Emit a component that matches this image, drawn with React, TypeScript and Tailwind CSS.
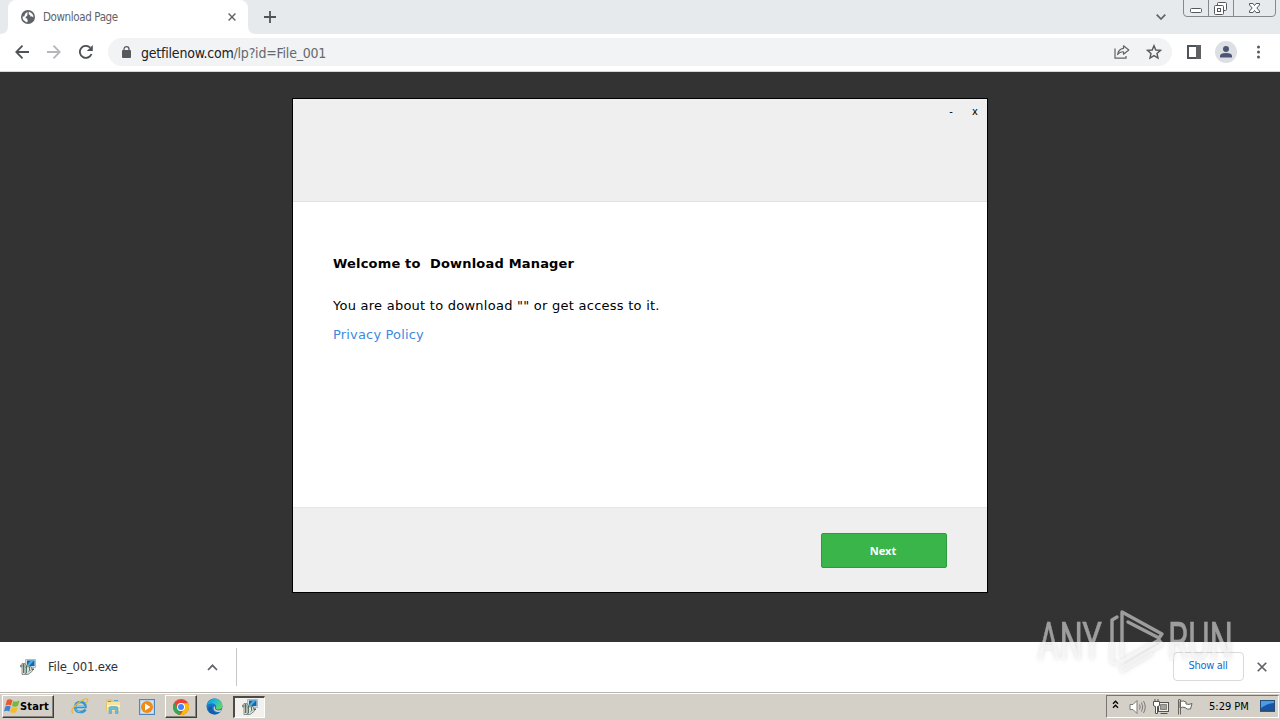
import type { ReactNode } from 'react';

function GlobeIcon() {
  return (
    <svg width="14" height="14" viewBox="0 0 14 14">
      <circle cx="7" cy="7" r="7" fill="#5f6368" />
      <path d="M7.500 1.600 A5.400 5.400 0 0 0 1.700 6.300 H4.200 L5.300 4.800 6.800 4.500 6.300 3.300Z M1.700 7.500 L5.300 7.600 7 9.200 8.200 9.500 8.600 8 10.600 7.300 12.400 7.800 A5.500 5.500 0 0 1 6.500 12.400 L6.600 10.800 3.800 9.800Z" fill="#fff" transform="rotate(90 7 7)" />
    </svg>
  );
}

function CrossIcon({ size = 8, color = '#5f6368' }: { size?: number; color?: string }) {
  return (
    <svg width={size} height={size} viewBox="0 0 8 8">
      <path d="M.6 .6 L7.4 7.4 M7.4 .6 L.6 7.4" stroke={color} strokeWidth="1.4" />
    </svg>
  );
}

function WindowControls() {
  return (
    <svg width="94" height="18" viewBox="0 0 94 18" fill="none">
      <path d="M.5 0 V13 Q.5 16.5 4 16.5 H89 Q92.500 16.500 92.500 13 V0 M25.500 0 V16 M50.500 0 V16" stroke="#85898e" />
      <g stroke="#54585c">
        <rect x="7.500" y="8.500" width="11" height="4" rx="1" fill="#fff" />
        <rect x="34.500" y="2.500" width="9" height="8" rx="1" fill="#fff" />
        <rect x="31.500" y="5.500" width="9" height="9" rx="1" fill="#fff" />
        <rect x="34.500" y="8.500" width="3" height="3" />
        <path d="M66.500 3.500 H70 L71.500 5.500 73 3.500 H76.500 V5 L73.800 8 76.500 11 V12.500 H73 L71.500 10.500 70 12.500 H66.500 V11 L69.200 8 66.500 5Z" fill="#fff" />
      </g>
    </svg>
  );
}

function TabStrip() {
  return (
    <div className="flex h-[34px] bg-[#e7eaed]">
      <svg width="8" height="34" viewBox="0 0 8 34">
        <path d="M0 34 Q8 34 8 26 V34Z" fill="#fff" />
      </svg>
      <div className="flex h-[34px] w-60 items-center rounded-t-lg bg-white pl-[13px] pr-3">
        <GlobeIcon />
        <span className="ml-2 flex-1 whitespace-nowrap pt-px text-[11.5px] tracking-[-0.38px] text-[#5f6368]">Download Page</span>
        <CrossIcon />
      </div>
      <svg width="8" height="34" viewBox="0 0 8 34">
        <path d="M8 34 Q0 34 0 26 V34Z" fill="#fff" />
      </svg>
      <svg className="ml-2 mt-[11px]" width="12" height="12" viewBox="0 0 12 12">
        <path d="M6 0 V12 M0 6 H12" stroke="#505458" strokeWidth="1.800" />
      </svg>
      <svg className="ml-auto mr-[17px] mt-[14px]" width="10" height="6" viewBox="0 0 10 6">
        <path d="M.7 .7 L5 5 9.300 .7" fill="none" stroke="#5f6368" strokeWidth="1.700" />
      </svg>
      <WindowControls />
      <div className="w-[3px]" />
    </div>
  );
}

function Toolbar() {
  return (
    <div className="flex h-[38px] items-center border-b border-[#d5d7da] bg-white pb-px">
      <svg className="ml-[15px]" width="14" height="14" viewBox="0 0 14 14" fill="none" stroke="#4f5357" strokeWidth="1.800">
        <path d="M14 7 H1.500 M7.500 .7 L1.300 7 7.500 13.300" />
      </svg>
      <svg className="ml-[18px]" width="14" height="14" viewBox="0 0 14 14" fill="none" stroke="#b5b7ba" strokeWidth="1.800">
        <path d="M0 7 H12.500 M6.500 .7 L12.700 7 6.500 13.300" />
      </svg>
      <svg className="ml-[18px]" width="14" height="14" viewBox="0 0 14 14">
        <path d="M12.500 9 A6 6 0 1 1 11.200 2.700" fill="none" stroke="#4f5357" strokeWidth="1.900" />
        <path d="M13.800 0 V6 H7.800Z" fill="#4f5357" />
      </svg>
      <div className="ml-[15px] flex h-7 w-[1064px] items-center rounded-full bg-[#f1f3f4] pl-[14px] pr-[10px]">
        <svg width="9" height="12" viewBox="0 0 9 12">
          <path d="M2 5 V3.300 Q2 .7 4.500 .7 T7 3.300 V5" fill="none" stroke="#55595d" strokeWidth="1.300" />
          <rect y="4" width="9" height="8" rx="1" fill="#55595d" />
        </svg>
        <span className="ml-[10px] flex-1 whitespace-nowrap pt-0.5 text-[14px] tracking-[-0.21px] text-[#202124]">
          getfilenow.com<span className="text-[#65696d]">/lp?id=File_001</span>
        </span>
        <svg className="mr-4" width="16" height="14" viewBox="0 0 16 14" fill="none" stroke="#5f6368" strokeWidth="1.200">
          <path d="M1 3.500 V13.200 H12 V11" />
          <path d="M9.500 3.300 V.8 L14.800 5 9.500 9.200 V6.800 Q6 6.500 3.600 9.500 Q4.500 4 9.500 3.300Z" strokeLinejoin="round" />
        </svg>
        <svg width="16" height="16" viewBox="0 0 16 16">
          <path d="M8 1.700 L9.800 6 14.500 6.400 11 9.400 12 14 8 11.600 4 14 5 9.400 1.500 6.400 6.200 6Z" fill="none" stroke="#55595d" strokeWidth="1.400" />
        </svg>
      </div>
      <svg className="ml-[15px]" width="14" height="14" viewBox="0 0 14 14">
        <path d="M1 1 H13 V13 H1Z" fill="none" stroke="#4f5357" strokeWidth="2" />
        <rect x="9" width="5" height="14" fill="#5f5f64" />
      </svg>
      <svg className="ml-[14px]" width="22" height="22" viewBox="0 0 22 22">
        <circle cx="11" cy="11" r="11" fill="#dcdfe4" />
        <circle cx="11" cy="8" r="3" fill="#4a5674" />
        <path d="M5 16.500 V15 Q5 12 11 12 T17 15 V16.500Z" fill="#4a5674" />
      </svg>
      <svg className="ml-5" width="4" height="14" viewBox="0 0 4 14" fill="#55595d">
        <circle cx="1.500" cy="2" r="1.500" />
        <circle cx="1.500" cy="7" r="1.500" />
        <circle cx="1.500" cy="12" r="1.500" />
      </svg>
    </div>
  );
}

function DownloadDialog() {
  return (
    <div className="mt-[26px] flex h-[495px] w-[696px] flex-col border border-black bg-white font-['DejaVu_Sans','Verdana',sans-serif] text-[13px] text-black">
      <header className="flex h-[103px] items-start justify-end border-b border-[#e0e0e0] bg-[#efefef] pr-2 pt-[5px] font-['DejaVu_Sans_Condensed','DejaVu_Sans',sans-serif] text-[11px] leading-4">
        <button className="w-2">-</button>
        <button className="ml-4 w-2">x</button>
      </header>
      <main className="flex-1 px-10">
        <h1 className="mt-[52px] whitespace-pre font-bold leading-5 tracking-[0.18px]">Welcome to  Download Manager</h1>
        <p className="mt-[22px] leading-5 tracking-[0.25px]">You are about to download "" or get access to it.</p>
        <a className="mt-[9px] block leading-5 tracking-[0.17px] text-[#3d8ae0]">Privacy Policy</a>
      </main>
      <footer className="flex h-[85px] justify-end border-t border-[#e6e6e6] bg-[#efefef] pr-10 pt-[25px]">
        <button className="h-[35px] w-[126px] rounded-[2px] border border-[#2f9a40] bg-[#39b54a] pr-0.5 pt-0.5 font-['Noto_Sans',sans-serif] text-[11px] font-bold text-white">
          Next
        </button>
      </footer>
    </div>
  );
}

function InstallerIcon() {
  return (
    <svg width="16" height="16" viewBox="0 0 16 16">
      <path d="M5.500 .5 H15.500 V8.500 H5.500Z" fill="#d3dde2" stroke="#8b9aa3" strokeWidth=".6" />
      <rect x="7" y="1.500" width="7.500" height="5.500" fill="#1268ad" />
      <path d="M7 6 L11 1.500 H14 L9 7H7Z" fill="#4aaee2" />
      <path d="M8 9.500 H14 V11 H8Z" fill="#515b5e" />
      <path d="M.5 6 H2 V4.500 H5 V6 H6.500 V15.500 H2 V8 H.5Z" fill="#e3e4d5" stroke="#626b65" strokeWidth=".7" />
      <path d="M5 8 L11 7.500 12.500 12 8 15.500 5 14.500Z" fill="#dfe5da" stroke="#52615c" strokeWidth=".7" />
      <path d="M3.500 5 V14 M6.500 7 V14 M9.500 8 V12 M1 7 H5" stroke="#3d6566" strokeWidth=".9" />
      <path d="M8 13 L11 11" stroke="#9aa79b" />
    </svg>
  );
}

function DownloadShelf() {
  return (
    <div className="flex h-[50px] items-center bg-white">
      <div className="flex h-[38px] w-[237px] items-center border-r border-[#c4c6c9] pl-5 pr-[18px]">
        <InstallerIcon />
        <span className="ml-3 flex-1 text-[13px] tracking-[-0.18px] text-[#303236]">File_001.exe</span>
        <svg width="11" height="7" viewBox="0 0 11 7">
          <path d="M1 6 L5.500 1.300 10 6" fill="none" stroke="#5f6368" strokeWidth="1.700" />
        </svg>
      </div>
      <button className="mb-[2px] ml-auto h-[29px] w-[71px] rounded border border-[#d8dadd] pr-px pt-px text-[11px] tracking-[-0.3px] text-[#1769cf]">Show all</button>
      <div className="ml-[13px] mr-[13px]">
        <CrossIcon size={10} />
      </div>
    </div>
  );
}

function WindowsFlag() {
  return (
    <svg width="16" height="15" viewBox="0 0 16 15">
      <path d="M3 1 Q6 -.5 8.500 1.500 L7 6.500 Q4.500 5 1.500 6.500Z" fill="#e8582b" />
      <path d="M9.300 2 Q12 3.500 15.500 1.500 L14 6.800 Q11 8.500 8 7Z" fill="#74b83d" />
      <path d="M1.300 7.500 Q4 6 6.700 7.500 L5.300 12.500 Q3 11 0 12.500Z" fill="#4380cf" />
      <path d="M7.600 8 Q10.500 9.500 13.700 8 L12.200 13 Q9 14.700 6.200 13Z" fill="#f5bc27" />
    </svg>
  );
}

function ExplorerIcon() {
  return (
    <svg width="18" height="17" viewBox="0 0 18 17" fill="none">
      <path d="M4.200 9 H14.500 Q14.500 4 9.500 4 T4.200 9 Q4.200 14 9.500 14 Q13 14 14.500 11.500" stroke="#3696d0" strokeWidth="2.600" />
      <path d="M4 8.500 H14 M4.500 11 Q6 14 9.500 14" stroke="#77c5eb" />
      <path d="M2 15.500 Q-1.500 12 6 6 Q13 .5 16 1 Q18 2 14.500 5.500" stroke="#e6b93b" strokeWidth="1.300" />
    </svg>
  );
}

function FolderIcon() {
  return (
    <svg width="16" height="17" viewBox="0 0 16 17">
      <path d="M1 3 L3 1 H7 L8 3 H14 V13 H1Z" fill="#e4c76c" />
      <path d="M2 4 H15 V13 H2Z" fill="#f5e4a0" />
      <path d="M3 3 H6 V4 H3Z" fill="#5daf56" />
      <path d="M9 2 H13 V3 H9Z" fill="#57a3c9" />
      <path d="M2 7 H15 V9 H2Z" fill="#fff2bb" />
      <path d="M4 15.500 V10 Q4 8.500 6 8.500 H11 Q13 8.500 13 10 V15.500 H10.500 V11.500 H6.500 V15.500Z" fill="#70bad9" stroke="#4c94b8" strokeWidth=".5" />
    </svg>
  );
}

function MediaIcon() {
  return (
    <svg width="16" height="16" viewBox="0 0 16 16">
      <rect x=".5" y=".5" width="15" height="15" fill="#b3d4ef" stroke="#4d87bd" />
      <rect x="2" y="2" width="12" height="12" fill="#d4e5ef" />
      <circle cx="8" cy="8" r="6" fill="#f28a18" />
      <path d="M6 4.500 L11.500 8 6 11.500Z" fill="#fff" />
    </svg>
  );
}

function ChromeIcon() {
  return (
    <svg width="16" height="16" viewBox="0 0 16 16">
      <circle cx="8" cy="8" r="8" fill="#ea4335" />
      <path d="M1.100 4 L4.700 10.100 Q5.700 12 8 12 L6.600 15.900 A8 8 0 0 1 1.100 4Z" fill="#34a853" />
      <path d="M8 4.200 H15 A8 8 0 0 1 7.300 16 L11.200 10Z" fill="#fbbc04" />
      <circle cx="8" cy="8" r="4" fill="#fff" />
      <circle cx="8" cy="8" r="3" fill="#4285f4" />
    </svg>
  );
}

function EdgeIcon() {
  return (
    <svg width="17" height="17" viewBox="0 0 17 17">
      <defs>
        <linearGradient id="edge-wave" x1="0" y1="0" x2="1" y2=".6">
          <stop stopColor="#178ad5" />
          <stop offset=".55" stopColor="#27bdd2" />
          <stop offset="1" stopColor="#65d75b" />
        </linearGradient>
      </defs>
      <circle cx="8.500" cy="8.500" r="8" fill="#1677c8" />
      <path d="M.6 7.500 C1 3.500 4.200 .5 8.500 .5 C13.500 .5 16.500 4 16.500 7.500 C16.500 10 14.500 11.500 12 11.500 C10 11.500 9.500 10.500 10 9.500 C10.800 7.500 9 5.500 6 5.500 C3.500 5.500 1.500 6 .6 7.500Z" fill="url(#edge-wave)" />
      <path d="M6 8 C4.500 12 8 15.500 13 14.800 C10 18 2.500 16.500 2 10.500 Q3 7.500 6 8Z" fill="#155da8" />
      <path d="M9 8 Q8 12 12 12.500 Q14.500 12.500 16 11 L14.500 13.800 Q8 15.200 7.500 9.500Z" fill="#d4d0c8" />
    </svg>
  );
}

function Raised({ children, className }: { children: ReactNode; className: string }) {
  return (
    <button className={`flex h-[23px] items-center border border-b-[#403e3a] border-l-white border-r-[#403e3a] border-t-white bg-[#d4d0c8] shadow-[inset_-1px_-1px_0_#85827b] ${className}`}>
      {children}
    </button>
  );
}

function SystemTray() {
  return (
    <div className="ml-auto mr-px flex h-[23px] w-[173px] items-center border border-b-white border-l-[#777570] border-r-white border-t-[#777570] pl-[5px]">
      <svg className="mb-1" width="7" height="9" viewBox="0 0 7 9" fill="none" stroke="#000" strokeWidth="1.300">
        <path d="M1 3.700 L3.500 1.200 6 3.700 M1 7.700 L3.500 5.200 6 7.700" />
      </svg>
      <svg className="ml-[10px]" width="17" height="16" viewBox="0 0 17 16" fill="none" stroke="#7c7a78">
        <path d="M1 5.500 H4 L8 1.500 V14.500 L4 10.500 H1Z" fill="#fff" />
        <path d="M10.500 5.500 Q12 8 10.500 10.500 M12.500 3.500 Q15 8 12.500 12.500 M14.500 2 Q18 8 14.500 14" />
      </svg>
      <svg className="ml-[7px]" width="16" height="16" viewBox="0 0 16 16" stroke="#55534f">
        <rect x="5.500" y="3.500" width="10" height="9" fill="#eee" />
        <path d="M7.500 5.500 H13.500 V10.500 H7.500Z" fill="#a5a39e" strokeWidth=".6" />
        <path d="M7.500 14.500 H14.500" />
        <path d="M.5 2.500 H6.500 V6 Q6.500 7.500 4.500 7.500 V14.500 H2.500 V7.500 Q.5 7.500 .5 6Z M2 0 V2.500 M5 0 V2.500" fill="#fff" />
      </svg>
      <svg className="ml-[8px]" width="16" height="16" viewBox="0 0 16 16" stroke="#66645f">
        <path d="M3 2.500 Q6 1 9 3 V5 Q12 6 15 4.500 L13.500 10 Q10 11 8 8.500 Q5.500 7.500 3 9Z" fill="#fff" />
        <path d="M1.500 1 V15.500 M3.500 1 V15.500 M1.500 .5 H3.500" fill="#fff" />
      </svg>
      <span className="ml-4 w-[42px] whitespace-nowrap pt-px text-[11px] text-black">5:29 PM</span>
      <svg className="ml-[9px]" width="15" height="13" viewBox="0 0 15 13">
        <rect x=".5" y=".5" width="14" height="10" fill="#1655aa" stroke="#254d78" />
        <path d="M1 1 H14 V3 Q8 3 1 8Z" fill="#4a9ce7" />
        <path d="M0 11.500 H15" stroke="#40566e" />
      </svg>
    </div>
  );
}

function Taskbar() {
  return (
    <div className="flex h-7 items-center border-t border-[#b8b5ae] bg-[#d4d0c8] shadow-[inset_0_1px_0_#fff]">
      <Raised className="ml-0.5 w-[52px] pl-px">
        <WindowsFlag />
        <span className="pt-px text-[11px] font-bold tracking-[0.15px] text-black">Start</span>
      </Raised>
      <div className="ml-[17px]"><ExplorerIcon /></div>
      <div className="ml-[16px]"><FolderIcon /></div>
      <div className="ml-[18px]"><MediaIcon /></div>
      <Raised className="ml-[10px] w-8 justify-center"><ChromeIcon /></Raised>
      <div className="ml-[9px]"><EdgeIcon /></div>
      <div className="ml-[10px] flex h-[22px] w-8 items-center justify-center border-2 border-b border-r border-b-white border-l-[#4c4a46] border-r-white border-t-[#4c4a46] bg-[#f3f1ee]">
        <InstallerIcon />
      </div>
      <SystemTray />
    </div>
  );
}

function Watermark() {
  return (
    <svg className="pointer-events-none absolute left-[1030px] top-[602px] overflow-visible drop-shadow-[0_0_2px_rgba(60,60,60,0.35)]" width="210" height="76" viewBox="0 0 210 76">
      <g opacity=".52">
        <g fill="#fff" stroke="#fff" strokeWidth=".5" fontFamily="Roboto, 'Liberation Sans', sans-serif" fontSize="51" fontWeight="400">
          <text x="8" y="57" textLength="64" lengthAdjust="spacingAndGlyphs">ANY</text>
          <text x="138" y="57" textLength="65" lengthAdjust="spacingAndGlyphs">RUN</text>
        </g>
        <g fill="none" stroke="#fff" strokeWidth="3.400" strokeLinejoin="round" strokeLinecap="round">
          <path d="M87 15 L82 18 V60 L87 62" />
          <path d="M92 54 V10 L132 32 L129 36 L98 20" />
          <path d="M92 59 L129 38 L132 42 L92 66 V69 L121 52" />
        </g>
      </g>
    </svg>
  );
}

export default function App() {
  return (
    <div className="relative flex h-[720px] w-[1280px] flex-col overflow-hidden bg-white font-['DejaVu_Sans_Condensed','Noto_Sans',sans-serif]">
      <TabStrip />
      <Toolbar />
      <div className="flex h-[570px] justify-center bg-[#333]">
        <DownloadDialog />
      </div>
      <DownloadShelf />
      <Taskbar />
      <Watermark />
    </div>
  );
}
